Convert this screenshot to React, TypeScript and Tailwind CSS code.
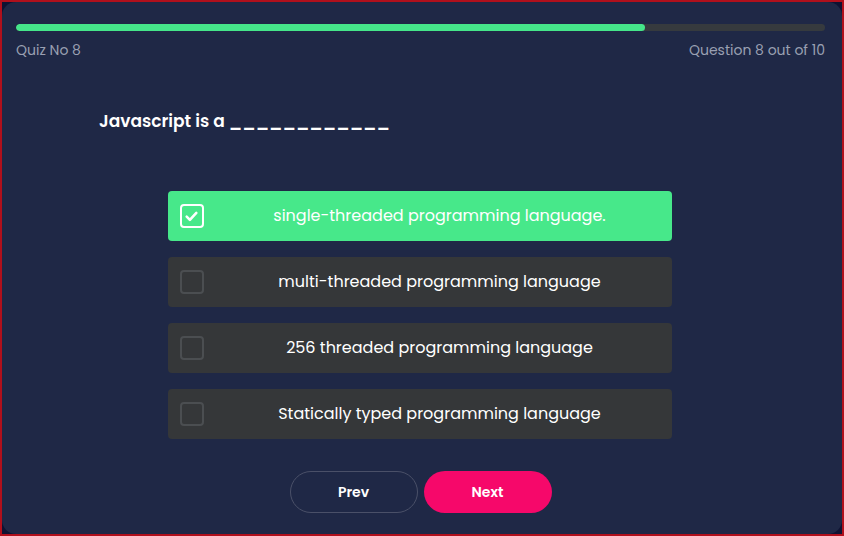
import React, { useState } from 'react';

// ============================================
// Data
// ============================================

const options = [
  'single-threaded programming language.',
  'multi-threaded programming language',
  '256 threaded programming language',
  'Statically typed programming language',
];

// ============================================
// Checkbox
// ============================================

const Checkbox: React.FC<{ checked: boolean }> = ({ checked }) => {
  if (checked) {
    return (
      <span className="w-6 h-6 shrink-0 rounded-[4px] border-[2.5px] border-white flex items-center justify-center">
        <svg width="15" height="15" viewBox="0 0 14 14" fill="none">
          <path d="M2.5 7.2l3 3 6-6.6" stroke="white" strokeWidth="2.4" strokeLinecap="round" strokeLinejoin="round" />
        </svg>
      </span>
    );
  }
  return <span className="w-6 h-6 shrink-0 rounded-[4px] border-[2.5px] border-[#4b4e51]" />;
};

// ============================================
// App
// ============================================

export default function App() {
  const [selected, setSelected] = useState(0);

  return (
    <div
      className="h-[536px] w-[844px] border-2 border-[#b0101c] bg-[#0e1333] flex"
      style={{ fontFamily: 'Poppins, "Noto Sans", sans-serif' }}
    >
      <div className="flex-1 rounded-[14px] bg-[#1f2846] pl-[14px] pr-[17px] pt-[22px] flex flex-col">
        {/* Progress */}
        <div className="h-[7px] rounded-full bg-[#363a3e] overflow-hidden">
          <div className="h-full rounded-full bg-[#45e68a]" style={{ width: '77.8%' }} />
        </div>
        <div className="mt-[9px] flex justify-between text-[14px] leading-5 text-[#9aa0b2]">
          <span>Quiz No 8</span>
          <span>Question 8 out of 10</span>
        </div>

        {/* Question */}
        <h2 className="mt-[49px] pl-[83px] text-[17px] leading-6 font-semibold text-white">
          Javascript is a ____________
        </h2>

        {/* Options */}
        <div className="mt-[58px] pr-[2px] flex flex-col gap-4 items-center">
          {options.map((opt, i) => (
            <button
              key={opt}
              onClick={() => setSelected(i)}
              className={`w-[504px] h-[50px] rounded-[4px] flex items-center px-3 text-[16px] text-white ${
                selected === i ? 'bg-[#47e88a]' : 'bg-[#353739]'
              }`}
            >
              <Checkbox checked={selected === i} />
              <span className="flex-1 text-center pl-4">{opt}</span>
            </button>
          ))}
        </div>

        {/* Nav */}
        <div className="mt-[32px] flex justify-center gap-[6px]">
          <button className="w-[128px] h-[42px] rounded-full border border-[#4a5068] text-white text-[14px] font-semibold">
            Prev
          </button>
          <button className="w-[128px] h-[42px] rounded-full bg-[#f6086a] text-white text-[14px] font-semibold">
            Next
          </button>
        </div>
      </div>
    </div>
  );
}
